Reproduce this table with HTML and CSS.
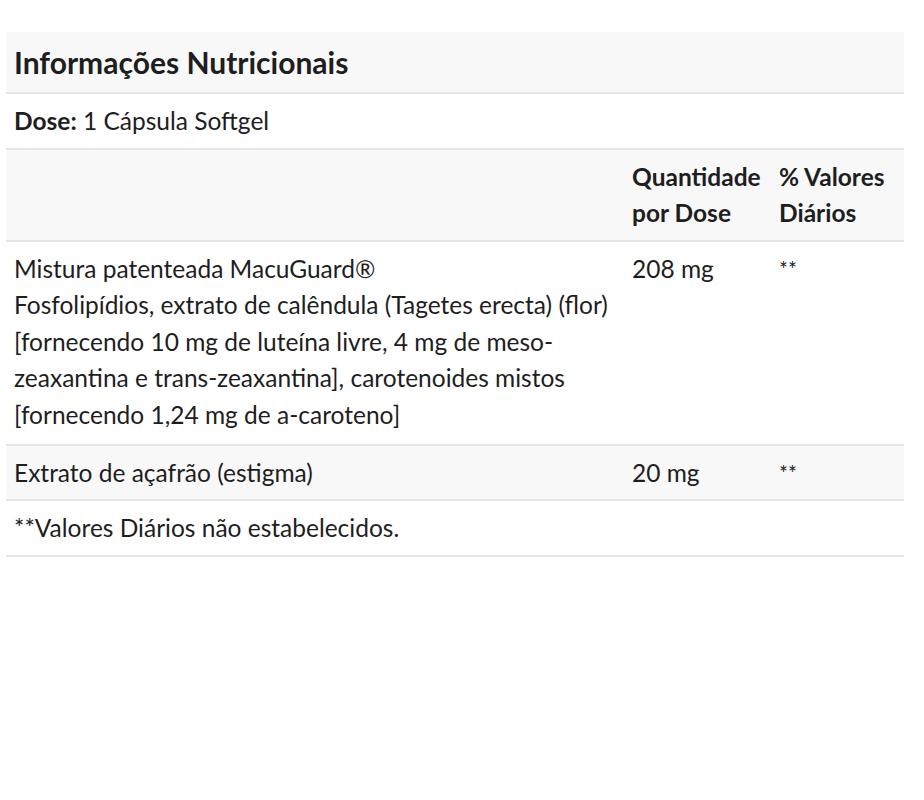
FILE: index.html
```html
<!DOCTYPE html>
<html lang="pt">
<head>
<meta charset="utf-8">
<title>Informações Nutricionais</title>
<link rel="stylesheet" href="styles.css">
</head>
<body>
<div class="wrap">
<table class="facts">
  <colgroup>
    <col class="c1"><col class="c2"><col class="c3">
  </colgroup>
  <tbody>
    <tr class="shade title-row"><th colspan="3" class="title">Informações Nutricionais</th></tr>
    <tr><td colspan="3"><strong>Dose:</strong> 1 Cápsula Softgel</td></tr>
    <tr class="shade head-row"><th></th><th>Quantidade por Dose</th><th>% Valores Diários</th></tr>
    <tr class="tall"><td>Mistura patenteada MacuGuard®<br>Fosfolipídios, extrato de calêndula (Tagetes erecta) (flor) [fornecendo 10 mg de luteína livre, 4 mg de meso-zeaxantina e trans-zeaxantina], carotenoides mistos [fornecendo 1,24 mg de a-caroteno]</td><td>208 mg</td><td class="dv">**</td></tr>
    <tr class="shade slim"><td>Extrato de açafrão (estigma)</td><td>20 mg</td><td class="dv">**</td></tr>
    <tr><td colspan="3">**Valores Diários não estabelecidos.</td></tr>
  </tbody>
</table>
</div>
</body>
</html>
```
FILE: styles.css
```css
html, body {
  margin: 0;
  padding: 0;
  background: #ffffff;
}
.wrap {
  padding: 32px 0 0 6px;
}
.facts {
  width: 898px;
  border-collapse: collapse;
  table-layout: fixed;
  font-family: Lato, "Liberation Sans", sans-serif;
  font-size: 24.5px;
  line-height: 36px;
  color: #1e1e1e;
}
.c1 { width: 618px; }
.c2 { width: 147px; }
.c3 { width: 133px; }
.facts td, .facts th {
  padding: 9px 8px 9px 8px;
  text-align: left;
  vertical-align: top;
  border-bottom: 2px solid #e6e6e6;
}
.facts th {
  font-weight: 700;
}
.shade td, .shade th {
  background: #f8f8f8;
}
.title {
  font-size: 30px;
  line-height: 42px;
  padding-top: 10px;
  padding-bottom: 8px;
}
.tall td {
  padding-top: 9px;
  padding-bottom: 11px;
  line-height: 36.4px;
}
.slim td {
  padding-top: 9px;
  padding-bottom: 8px;
}
.facts strong { font-weight: 700; }
.dv {
  font-size: 21px;
}
```
